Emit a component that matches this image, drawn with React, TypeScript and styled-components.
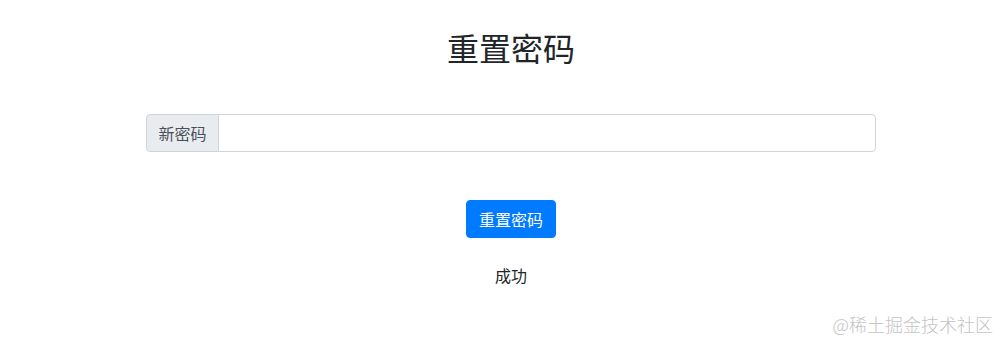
import { createGlobalStyle } from "styled-components";
import styled from "styled-components";

const GlobalStyle = createGlobalStyle`
  body {
    margin: 0;
    background: #fff;
    font-family: "Noto Sans CJK SC", "Noto Sans", sans-serif;
    color: #212529;
  }
`;

export default function App() {
  return (
    <>
      <GlobalStyle />
      <Page>
        <Main>
          <Title>重置密码</Title>
          <InputGroup>
            <Addon>新密码</Addon>
            <Input type="password" />
          </InputGroup>
          <Actions>
            <Button>重置密码</Button>
          </Actions>
          <Status>成功</Status>
        </Main>
        <Watermark>@稀土掘金技术社区</Watermark>
      </Page>
    </>
  );
}

const Page = styled.div`
  position: relative;
  width: 1000px;
  height: 343px;
  overflow: hidden;
`;

const Main = styled.div`
  width: 730px;
  margin-left: 146px;
  padding-top: 28px;
  display: flex;
  flex-direction: column;
`;

const Title = styled.h2`
  margin: 0;
  font-size: 32px;
  font-weight: 400;
  line-height: 38px;
  text-align: center;
  color: #212529;
`;

const InputGroup = styled.div`
  margin-top: 48px;
  display: flex;
  height: 38px;
`;

const Addon = styled.span`
  display: flex;
  align-items: center;
  justify-content: center;
  box-sizing: border-box;
  width: 73px;
  padding: 0;
  white-space: nowrap;
  font-size: 16px;
  color: #495057;
  background: #e9ecef;
  border: 1px solid #ced4da;
  border-radius: 4px 0 0 4px;
`;

const Input = styled.input`
  flex: 1;
  box-sizing: border-box;
  height: 38px;
  margin: 0 0 0 -1px;
  border: 1px solid #ced4da;
  border-radius: 0 4px 4px 0;
  outline: none;
  font-size: 16px;
`;

const Actions = styled.div`
  margin-top: 48px;
  display: flex;
  justify-content: center;
`;

const Button = styled.button`
  width: 90px;
  height: 38px;
  border: 1px solid #007bff;
  border-radius: 4px;
  background: #007bff;
  color: #fff;
  font-family: "Noto Sans CJK SC", sans-serif;
  font-size: 16px;
  padding: 0;
`;

const Status = styled.p`
  margin: 25px 0 0;
  font-size: 16px;
  line-height: 24px;
  text-align: center;
  color: #212529;
`;

const Watermark = styled.span`
  position: absolute;
  right: 7px;
  bottom: 6px;
  font-family: "Noto Sans CJK SC", sans-serif;
  font-size: 18px;
  font-weight: 300;
  color: #c4c4c4;
`;
